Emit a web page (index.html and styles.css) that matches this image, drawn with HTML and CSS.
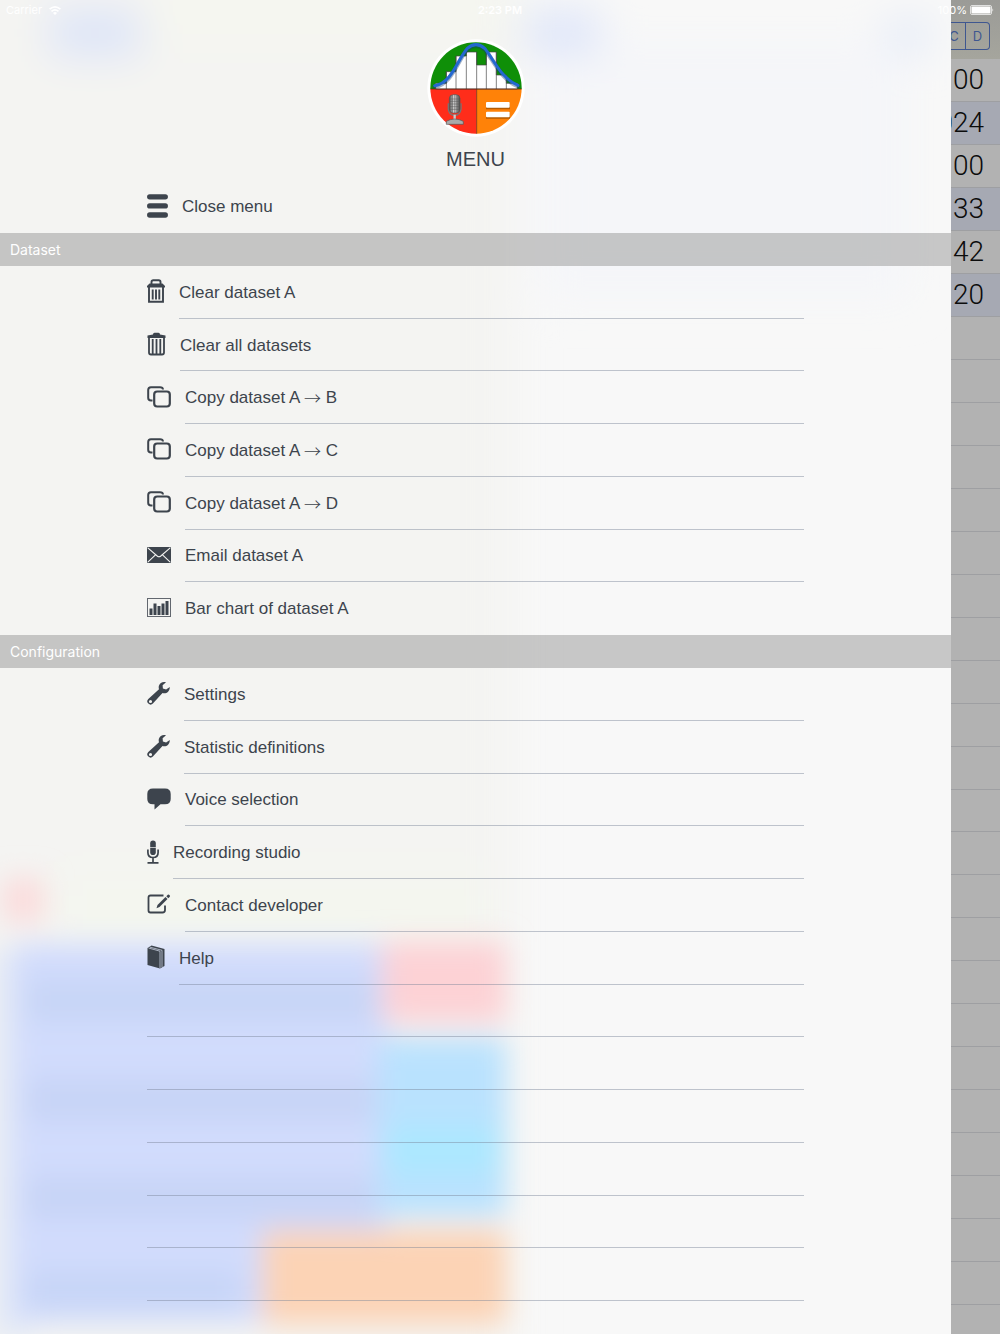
FILE: index.html
```html
<!DOCTYPE html>
<html lang="en">
<head>
<meta charset="utf-8">
<meta name="viewport" content="width=device-width, initial-scale=1">
<title>Menu</title>
<link rel="stylesheet" href="styles.css">
</head>
<body>
<svg class="sprite" aria-hidden="true">
  <symbol id="copy" viewBox="0 0 24 22">
    <path d="M5.500 14.500H4Q1.200 14.500 1.200 11.700V4Q1.200 1.200 4 1.200H13Q15.800 1.200 16 3.500" fill="none" stroke="currentColor" stroke-width="2"/>
    <rect x="7.200" y="5.500" width="15.600" height="15" rx="3" fill="none" stroke="currentColor" stroke-width="2.200"/>
  </symbol>
  <symbol id="wrench" viewBox="0 0 23 24">
    <path fill="currentColor" fill-rule="evenodd" d="M19 1.200C16 .2 12.800 1.700 11.900 4.700c-.4 1.400-.2 2.400.1 3.500L1.300 18a3.200 3.200 0 1 0 4.600 4.500L15.500 12c3.200 1.200 7.300-.8 7.300-6l-3.700 2.600-3.200-1.200-.3-3.200zM3.500 18.900a1.600 1.600 0 1 1 0 3.200 1.600 1.600 0 0 1 0-3.200z"/>
  </symbol>
</svg>

<div class="screen">
  <header class="status">
    <span class="carrier">Carrier
      <svg width="12" height="9" viewBox="0 0 12 9" fill="none" stroke="currentColor" stroke-width="1.600"><path d="M.6 3.200Q6-1.500 11.400 3.200M2.500 5.400Q6 2.400 9.500 5.400"/><path d="M4 6.900Q6 5.300 8 6.900L6 9z" fill="currentColor" stroke="none"/></svg>
    </span>
    <span class="clock">2:23 PM</span>
    <span class="power">100%
      <svg width="24" height="10" viewBox="0 0 24 10"><rect x=".5" y=".5" width="21" height="9" rx="1.500" fill="none" stroke="currentColor" stroke-opacity=".7"/><rect x="1.500" y="1.500" width="19" height="7" rx="1" fill="currentColor"/><path d="M22.500 3.200Q24 5 22.500 6.800z" fill="currentColor"/></svg>
    </span>
  </header>

  <main class="app">
    <div class="tabs"><button type="button">C</button><button type="button">D</button></div>
    <ol class="values">
      <li>00</li><li>024</li><li>00</li><li>33</li><li>42</li><li>20</li>
      <li></li><li></li><li></li><li></li><li></li><li></li><li></li><li></li><li></li><li></li><li></li><li></li>
      <li></li><li></li><li></li><li></li><li></li><li></li><li></li><li></li><li></li><li></li><li></li>
    </ol>
  </main>

  <nav class="menu" aria-label="Menu">
    <svg class="backdrop" aria-hidden="true">
      <defs>
        <filter id="soft" x="-50%" y="-50%" width="200%" height="200%"><feGaussianBlur stdDeviation="14"/></filter>
        <filter id="wide" x="-50%" y="-50%" width="200%" height="200%"><feGaussianBlur stdDeviation="20"/></filter>
      </defs>
      <g filter="url(#wide)">
        <rect x="-80" y="-80" width="595" height="1500" fill="#f4f4f2"/>
        <rect x="540" y="40" width="370" height="260" fill="#f5f6f9"/>
        <rect x="60" y="875" width="430" height="60" fill="#f4f6ef"/>
        <rect x="150" y="-20" width="370" height="60" fill="#f5f6f0"/>
        <rect x="50" y="10" width="90" height="46" fill="#dce4f8"/>
        <rect x="525" y="10" width="75" height="46" fill="#dfe6f9"/>
        <rect x="885" y="16" width="46" height="38" fill="#e6ecf8"/>
      </g>
      <g filter="url(#soft)">
        <rect x="2" y="878" width="42" height="44" fill="#fbdcdc"/>
        <rect x="-10" y="950" width="40" height="390" fill="#e4eaf6"/>
        <rect x="14" y="944" width="374" height="378" fill="#d1dcfd"/>
        <rect x="26" y="980" width="350" height="42" fill="#c7d5f6"/>
        <rect x="26" y="1079" width="350" height="42" fill="#c7d4f6"/>
        <rect x="26" y="1177" width="350" height="42" fill="#c7d4f6"/>
        <rect x="26" y="1270" width="214" height="42" fill="#c7d5f7"/>
        <rect x="382" y="942" width="124" height="80" fill="#fdd2d5"/>
        <rect x="378" y="1038" width="128" height="178" fill="#b9e2fe"/>
        <rect x="386" y="1128" width="112" height="44" fill="#abe8ff"/>
        <rect x="262" y="1230" width="244" height="94" fill="#fcd3b5"/>
      </g>
    </svg>

    <div class="brand">
      <svg width="100" height="100" viewBox="31 24 300 300" role="img" aria-label="Logo">
        <defs>
          <clipPath id="disc"><circle cx="181" cy="174" r="137"/></clipPath>
          <linearGradient id="metal"><stop offset="0" stop-color="#555"/><stop offset=".45" stop-color="#ddd"/><stop offset="1" stop-color="#444"/></linearGradient>
        </defs>
        <circle cx="181" cy="174" r="146" fill="#fff"/>
        <g clip-path="url(#disc)">
          <rect x="40" y="30" width="290" height="147" fill="#0f8f08"/>
          <rect x="40" y="177" width="143" height="145" fill="#ff2d1a"/>
          <rect x="183" y="177" width="145" height="145" fill="#ff8208"/>
          <path d="M60 177V160H92V125H121V78H152V66H183V105H212V66H242V135H272V160H305V177zM92 125V177M121 78V177M152 66V177M183 66V177M212 66V177M242 66V177M272 135V177" fill="#fff" stroke="#444" stroke-width="2"/>
          <path d="M40 177H325M183 177V315" stroke="#5a1d08" stroke-width="2"/>
        </g>
        <path d="M57 170C108 163 125 93 154 59Q181 35 208 59C237 97 258 149 307 169" fill="none" stroke="#123a70" stroke-opacity=".4" stroke-width="13" stroke-linecap="round"/>
        <path d="M57 167C108 160 125 90 154 56Q181 32 208 56C237 94 258 146 307 166" fill="none" stroke="#2468d0" stroke-width="9" stroke-linecap="round"/>
        <path d="M211 221H283V238H211zM211 250H283V266H211z" fill="#6a3500" opacity=".5"/>
        <rect x="211" y="216" width="71" height="17" rx="3" fill="#fff"/><rect x="211" y="245" width="71" height="17" rx="3" fill="#fff"/>
        <path d="M98 220V238Q101 256 117 256T136 238V220" fill="none" stroke="#777" stroke-width="4"/>
        <rect x="101" y="194" width="32" height="55" rx="12" fill="url(#metal)" stroke="#555" stroke-width="2"/>
        <path d="M103 207H131M103 214H131M103 222H131M103 230H131M103 238H131M110 195V247M117 194V249M124 195V247" stroke="#555" stroke-width="1.500"/>
        <path d="M117 254V270" stroke="#ccc" stroke-width="7"/><path d="M92 274Q117 260 143 274V283H92z" fill="#aaa" stroke="#555" stroke-width="2"/>
      </svg>
      <h1>MENU</h1>
    </div>

    <div class="items single">
      <button type="button" class="item"><svg width="21" height="24" viewBox="0 0 21 24"><path d="M2.700 2.800H18.300M2.700 11.900H18.300M2.700 21H18.300" stroke="currentColor" stroke-width="5.300" stroke-linecap="round"/></svg><span>Close menu</span></button>
    </div>

    <h2>Dataset</h2>
    <div class="items dataset">
      <button type="button" class="item"><svg width="18" height="24" viewBox="0 0 18 24"><path d="M4.500 5.500V3Q4.500 1.200 6.300 1.200H11.700Q13.500 1.200 13.500 3V5.500" fill="none" stroke="currentColor" stroke-width="1.900"/><path d="M2.500 4.500H15.500L18 7V8.500H0V7z" fill="currentColor"/><path d="M2 8V22.700H16V8M5.700 10.500V20.500M9 10.500V20.500M12.300 10.500V20.500" fill="none" stroke="currentColor" stroke-width="1.900"/></svg><span>Clear dataset A</span></button>
      <button type="button" class="item"><svg width="19" height="24" viewBox="0 0 19 24"><path d="M6 2.500Q6 .7 7.500 .7H11.500Q13 .7 13 2.500L18.500 3.500V6H.5V3.500z" fill="currentColor"/><path d="M2 6V20.500Q2 22.500 4 22.500H15Q17 22.500 17 20.500V6M5.700 7V21.500M9.500 7V21.500M13.300 7V21.500" fill="none" stroke="currentColor" stroke-width="1.800"/></svg><span>Clear all datasets</span></button>
      <button type="button" class="item"><svg width="24" height="22"><use href="#copy"/></svg><span>Copy dataset A <i>→</i> B</span></button>
      <button type="button" class="item"><svg width="24" height="22"><use href="#copy"/></svg><span>Copy dataset A <i>→</i> C</span></button>
      <button type="button" class="item"><svg width="24" height="22"><use href="#copy"/></svg><span>Copy dataset A <i>→</i> D</span></button>
      <button type="button" class="item"><svg width="24" height="16" viewBox="0 0 24 16"><rect width="24" height="16" rx="1" fill="currentColor"/><path d="M.8 .8L10.500 9.200Q12 10.200 13.500 9.200L23.200 .8M.8 15.200L8.500 7.800M23.200 15.200L15.500 7.800" fill="none" stroke="#f4f4f2" stroke-width="1.100"/></svg><span>Email dataset A</span></button>
      <button type="button" class="item"><svg width="24" height="19" viewBox="0 0 24 19"><rect x=".5" y=".5" width="23" height="18" fill="none" stroke="currentColor" stroke-opacity=".8"/><path d="M2.500 17V10.500H5.500V17zM6.500 17V5.500H9.500V17zM10.500 17V8H13.500V17zM14.500 17V5.500H17.500V17zM18.500 17V3H21.500V17z" fill="currentColor"/></svg><span>Bar chart of dataset A</span></button>
    </div>

    <h2>Configuration</h2>
    <div class="items config">
      <button type="button" class="item"><svg width="23" height="24"><use href="#wrench"/></svg><span>Settings</span></button>
      <button type="button" class="item"><svg width="23" height="24"><use href="#wrench"/></svg><span>Statistic definitions</span></button>
      <button type="button" class="item"><svg width="24" height="22" viewBox="0 0 24 22"><path d="M6 .5H18Q23.700 .5 23.700 6V11Q23.700 16.300 18 16.300H13.500L7.500 21.500V16.300H6Q.3 16.300 .3 11V6Q.3 .5 6 .5z" fill="currentColor"/></svg><span>Voice selection</span></button>
      <button type="button" class="item"><svg width="12" height="24" viewBox="0 0 12 24"><rect x="3.200" y=".5" width="5.600" height="14.500" rx="2.800" fill="currentColor"/><path d="M.9 9.500V12.500Q.9 17.500 6 17.500T11.100 12.500V9.500M6 17.500V22.500M.5 22.800H11.500" fill="none" stroke="currentColor" stroke-width="1.700"/><path d="M3 7.500H9" stroke="#f4f4f2" stroke-width=".7"/></svg><span>Recording studio</span></button>
      <button type="button" class="item"><svg width="24" height="20" viewBox="0 0 24 20"><path d="M16.500 1.500H3.500Q1.500 1.500 1.500 3.500V16.500Q1.500 18.500 3.500 18.500H15.500Q18 18.500 18 16V11.500" fill="none" stroke="currentColor" stroke-width="1.800"/><path d="M9.500 14.300L10.500 11L18.500 3L20.500 5L12.500 13z" fill="currentColor"/><path d="M19.300 2.200L20.800 .8Q21.800 .3 22.600 1.200T22.800 2.800L21.300 4.200z" fill="currentColor"/></svg><span>Contact developer</span></button>
      <button type="button" class="item"><svg width="18" height="24" viewBox="0 0 18 24"><path d="M.5 3L4.500 .5L17.500 4V21L13 23.500L.5 20z" fill="currentColor"/><path d="M1.500 3L13 6.200V23M3 2.200L15 5.300V22" fill="none" stroke="#d8dff0" stroke-width=".7"/></svg><span>Help</span></button>
      <hr><hr><hr><hr><hr><hr>
    </div>
  </nav>
</div>
</body>
</html>
```
FILE: styles.css
```css
* { box-sizing: border-box; }

body {
  margin: 0;
  background: #b2b2b2;
  color: #3d444d;
  font-family: "Liberation Sans", Arial, sans-serif;
}

button {
  padding: 0;
  border: 0;
  background: none;
  color: inherit;
  font: inherit;
}

.sprite { display: none; }

/* The app, the menu and the status bar share one grid cell */
.screen {
  display: grid;
  min-height: 100vh;
}

.screen > * { grid-area: 1 / 1; min-width: 0; }

.status {
  z-index: 2;
  display: grid;
  grid-template-columns: 1fr auto 1fr;
  align-self: start;
  height: 20px;
  padding: 0 6px;
  align-items: center;
  color: #fff;
  font: 11px/20px Inter, sans-serif;
}

.carrier, .power { display: flex; align-items: center; gap: 7px; }
.power { justify-content: flex-end; gap: 3px; }
.clock { font-weight: 600; }

.app { background: linear-gradient(#9b9b97, #a5a59d 59px, #b2b2b2 59px); }

.tabs {
  display: flex;
  justify-content: flex-end;
  height: 59px;
  padding: 22px 10px 9px;
}

.tabs button {
  width: 24px;
  border: 1px solid #3f5790;
  color: #3f5790;
  font: 13px Inter, sans-serif;
}

.tabs button:last-child { border-left: 0; border-radius: 0 4px 4px 0; }

.values {
  display: grid;
  grid-auto-rows: 1fr;
  height: 1246px;
  margin: 0;
  padding: 0;
  list-style: none;
  background: #b2b2b2;
  border-radius: 0 8px 0 0;
  color: #0c0c0c;
  font: 300 28px/42px Roboto, sans-serif;
  text-align: right;
}

.values li { padding-right: 16px; border-bottom: 1px solid #9e9fa2; }
.values li:nth-child(2n):nth-child(-n+6) { background: #a6a9b3; }

.menu {
  position: relative;
  z-index: 1;
  display: grid;
  align-content: start;
  width: 95.1%;
  overflow: hidden;
  background: #f8f8f8;
}

.menu > * { position: relative; }

.menu > .backdrop {
  position: absolute;
  top: 0;
  left: 0;
  width: 100%;
  height: 100%;
}

.brand {
  display: grid;
  justify-items: center;
  height: 180px;
  padding-top: 38px;
}

h1 {
  margin: 0;
  font-size: 20px;
  line-height: 42px;
  font-weight: 400;
}

h2 {
  margin: 0;
  padding-left: 10px;
  background: rgba(150, 150, 150, .5);
  color: #fff;
  font: 14px/33px Inter, sans-serif;
}

.items {
  display: grid;
  grid-auto-rows: 1fr;
  padding: 0 147px;
}

.single { height: 53px; }
.dataset { height: 369px; }
.config { height: 633px; }

.item {
  display: flex;
  align-items: center;
  gap: 14px;
  font-size: 17px;
  text-align: left;
}

.item svg { flex: none; margin-bottom: 2px; }

.item span {
  display: flex;
  flex: 1;
  align-self: stretch;
  align-items: center;
  padding-top: 2px;
  border-bottom: 1px solid rgba(120, 130, 150, .45);
  white-space: pre;
}

.item i {
  font-family: "Noto Sans CJK SC", sans-serif;
  font-style: normal;
  font-weight: 300;
  line-height: 20px;
}

.single span, .dataset .item:last-child span { border-bottom-color: transparent; }

hr {
  width: 100%;
  margin: 0;
  border: 0;
  border-bottom: 1px solid rgba(120, 130, 150, .45);
}
```
